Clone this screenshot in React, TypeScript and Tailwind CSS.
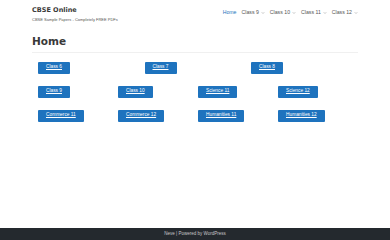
import { ChevronDown } from 'lucide-react'

const rowOne = ['Class 6', 'Class 7', 'Class 8']
const rowTwo = ['Class 9', 'Class 10', 'Science 11', 'Science 12']
const rowThree = ['Commerce 11', 'Commerce 12', 'Humanities 11', 'Humanities 12']

const navItems = ['Class 9', 'Class 10', 'Class 11', 'Class 12']

function LinkButton({ label }: { label: string }) {
  return (
    <a
      href="#"
      className="flex h-[12px] items-center rounded-[1px] bg-[#1e73be] px-[8px] text-[4.8px] leading-none text-white underline"
    >
      {label}
    </a>
  )
}

export default function App() {
  return (
    <div className="flex h-[240px] w-[390px] flex-col bg-white font-['Liberation_Sans',sans-serif] text-[#404248]">
      {/* header */}
      <header className="flex h-[30px] items-center justify-between px-[32px]">
        <div className="flex flex-col gap-[4px] pb-[1px]">
          <span className="font-['DejaVu_Sans',sans-serif] text-[6.5px] font-bold leading-none text-[#393939]">
            CBSE Online
          </span>
          <span className="text-[4px] leading-none text-[#555]">CBSE Sample Papers - Completely FREE PDFs</span>
        </div>
        <nav className="flex items-center gap-[5px] pb-[4px] text-[5.2px] leading-none text-[#555]">
          <a href="#" className="text-[#1e73be]">
            Home
          </a>
          {navItems.map((item) => (
            <span key={item} className="flex items-center gap-[2px]">
              {item}
              <ChevronDown className="h-[4px] w-[4px]" strokeWidth={2} />
            </span>
          ))}
        </nav>
      </header>

      <main className="flex-1 px-[32px]">
        <h1 className="border-b border-[#f0f0f0] pb-[5px] pt-[6px] font-['DejaVu_Sans',sans-serif] text-[10.5px] font-bold leading-none text-[#393939]">
          Home
        </h1>

        <div className="mt-[9px] flex flex-col gap-[12px]">
          <div className="grid grid-cols-[106.5px_106.5px_106.5px]">
            {rowOne.map((label) => (
              <div key={label} className="flex pl-[6px]">
                <LinkButton label={label} />
              </div>
            ))}
          </div>
          <div className="grid grid-cols-[80px_80px_80px_80px]">
            {rowTwo.map((label) => (
              <div key={label} className="flex pl-[6px]">
                <LinkButton label={label} />
              </div>
            ))}
          </div>
          <div className="grid grid-cols-[80px_80px_80px_80px]">
            {rowThree.map((label) => (
              <div key={label} className="flex pl-[6px]">
                <LinkButton label={label} />
              </div>
            ))}
          </div>
        </div>
      </main>

      <footer className="flex h-[12px] items-center justify-center bg-[#24292e] text-[4.5px] leading-none text-[#c8c8c8]">
        Neve | Powered by WordPress
      </footer>
    </div>
  )
}
